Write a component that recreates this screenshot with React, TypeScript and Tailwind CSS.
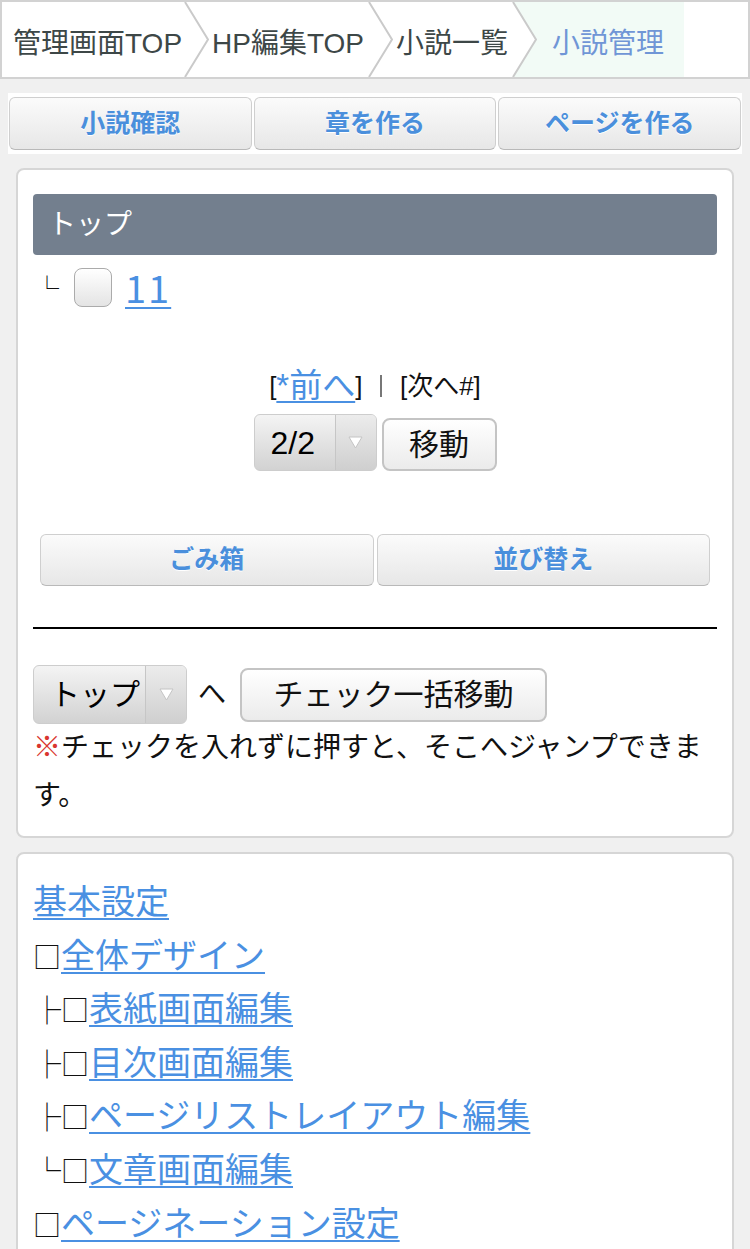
import React from 'react';

const FONT = "font-['Liberation_Sans','Noto_Sans_CJK_JP',sans-serif]";
const CJK = "font-['Noto_Sans_CJK_JP',sans-serif]";
const LINK = 'text-[#4a90e2] underline decoration-[2px] underline-offset-[4px]';

const CRUMBS = ['管理画面TOP', 'HP編集TOP', '小説一覧'];

const TREE = [
  { prefix: '', label: '基本設定' },
  { prefix: '□', label: '全体デザイン' },
  { prefix: '├□', label: '表紙画面編集' },
  { prefix: '├□', label: '目次画面編集' },
  { prefix: '├□', label: 'ページリストレイアウト編集' },
  { prefix: '└□', label: '文章画面編集' },
  { prefix: '□', label: 'ページネーション設定' },
];

function Chevron({ active }: { active?: boolean }) {
  return (
    <svg width="25" height="75" viewBox="0 0 25 75" className="block shrink-0">
      {active && <polygon points="1,0 25,0 25,75 1,75 24,37.5" fill="#f2fbf6" />}
      <polyline points="1,0 24,37.5 1,75" fill="none" stroke="#cacaca" strokeWidth="2" />
    </svg>
  );
}

function ActionButton({ label, className = '' }: { label: string; className?: string }) {
  return (
    <button
      className={`flex items-center justify-center rounded-[6px] border-[1.5px] border-[#cfcfcf] border-b-[#b9b9b9] bg-gradient-to-b from-[#fbfbfb] to-[#e7e7e7] text-[25px] font-bold text-[#4a8fdc] [text-shadow:0_1px_0_#fff] ${className}`}
    >
      {label}
    </button>
  );
}

function SelectBox({ value, className = '' }: { value: string; className?: string }) {
  return (
    <div
      className={`flex overflow-hidden rounded-[6px] border border-[#cdcdcd] bg-gradient-to-b from-[#f4f4f4] to-[#d2d2d2] text-[30px] text-black ${className}`}
    >
      <div className="flex flex-1 items-center pl-[16px]">{value}</div>
      <div className="flex w-[41px] items-center justify-center border-l border-[#c6c6c6] bg-gradient-to-b from-[#ececec] to-[#cfcfcf]">
        <svg width="15" height="13" viewBox="0 0 15 13">
          <polygon points="1,1 14,1 7.5,12" fill="#fff" stroke="#c4c4c4" strokeWidth="1" />
        </svg>
      </div>
    </div>
  );
}

function PlainButton({ label, className = '' }: { label: string; className?: string }) {
  return (
    <button
      className={`flex items-center justify-center rounded-[8px] border-2 border-[#c4c4c4] bg-gradient-to-b from-[#ffffff] to-[#ebebeb] text-[30px] text-[#111] ${className}`}
    >
      {label}
    </button>
  );
}

export default function App() {
  return (
    <div className={`min-h-screen bg-[#f0f0f0] text-[28px] text-[#111] ${FONT}`}>
      {/* breadcrumb */}
      <nav className="flex h-[79px] items-stretch border-2 border-[#d2d2d2] bg-white">
        {CRUMBS.map((c, i) => (
          <React.Fragment key={c}>
            <div
              className={`flex items-center whitespace-nowrap pt-[8px] text-[28px] text-[#3d4747] ${i === 0 ? 'pl-[11px] pr-[2px]' : 'pl-[3px] pr-[4px]'}`}
            >
              {c}
            </div>
            <Chevron active={i === CRUMBS.length - 1} />
          </React.Fragment>
        ))}
        <div className="flex items-center bg-[#f2fbf6] pl-[15px] pr-[20px] pt-[8px] text-[28px] text-[#7096d6]">小説管理</div>
      </nav>

      {/* top actions */}
      <div className="mx-[8px] mt-[14px] grid grid-cols-3 gap-[2px] bg-white px-[1px] py-[4px]">
        <ActionButton label="小説確認" className="h-[53px]" />
        <ActionButton label="章を作る" className="h-[53px]" />
        <ActionButton label="ページを作る" className="h-[53px]" />
      </div>

      {/* novel tree panel */}
      <section className="mx-[16px] mt-[14px] rounded-[8px] border-2 border-[#d6d6d6] bg-white px-[15px] pb-[16px] pt-[24px]">
        <div className="flex h-[61px] items-center rounded-[4px] bg-[#737f8e] pl-[15px] text-[28px] text-white">トップ</div>

        <div className="flex h-[64px] items-center">
          <span className={`ml-[2px] text-[24px] ${CJK}`}>└</span>
          <span className="ml-[15px] h-[39px] w-[38px] rounded-[8px] border-[1.5px] border-[#ababab] bg-gradient-to-b from-[#ffffff] to-[#e4e4e4]" />
          <a className={`ml-[13px] text-[38px] leading-none tracking-[2px] ${LINK} ${CJK}`}>11</a>
        </div>

        <div className="mt-[49px] flex items-center justify-center text-[26px] leading-[36px]">
          <span>[</span>
          <a className={`text-[33px] ${LINK}`}>*前へ</a>
          <span>]</span>
          <span className="mx-[18px] h-[22px] w-[1.5px] bg-[#777]" />
          <span>[次へ#]</span>
        </div>

        <div className="mt-[10px] flex items-end justify-center gap-[5px]">
          <SelectBox value="2/2" className="h-[57px] w-[123px] text-[32px]" />
          <PlainButton label="移動" className="h-[53px] w-[115px]" />
        </div>

        <div className="mx-[7px] mt-[63px] grid grid-cols-2 gap-[3px]">
          <ActionButton label="ごみ箱" className="h-[52px]" />
          <ActionButton label="並び替え" className="h-[52px]" />
        </div>

        <div className="mt-[41px] h-[2px] bg-black" />

        <div className="mt-[36px] flex items-center">
          <SelectBox value="トップ" className="h-[59px] w-[154px]" />
          <span className="ml-[11px] text-[28px]">へ</span>
          <PlainButton label="チェック一括移動" className="ml-[14px] h-[54px] w-[307px]" />
        </div>

        <p className="leading-[48px]">
          <span className="text-[#d9362f]">※</span>チェックを入れずに押すと、そこへジャンプできます。
        </p>
      </section>

      {/* settings panel */}
      <section className="mx-[16px] mt-[14px] rounded-[8px] border-2 border-[#d6d6d6] bg-white px-[15px] pb-[24px] pt-[19px]">
        {TREE.map((t) => (
          <div key={t.label} className={`h-[53.6px] whitespace-nowrap leading-[53.6px] ${CJK}`}>
            {t.prefix && <span className="text-[28px]">{t.prefix}</span>}
            <a className={`text-[34px] ${LINK}`}>{t.label}</a>
          </div>
        ))}
      </section>
    </div>
  );
}
